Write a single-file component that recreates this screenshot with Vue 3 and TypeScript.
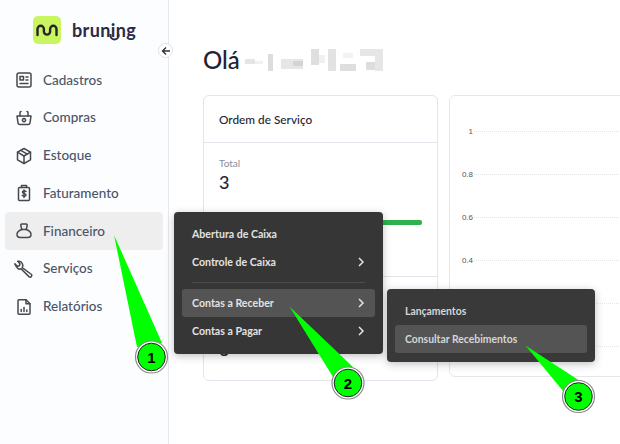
<script setup lang="ts">
interface NavItem { label: string; icon: string; active?: boolean }
const nav: NavItem[] = [
  { label: 'Cadastros', icon: 'card' },
  { label: 'Compras', icon: 'basket' },
  { label: 'Estoque', icon: 'box' },
  { label: 'Faturamento', icon: 'bill' },
  { label: 'Financeiro', icon: 'bag', active: true },
  { label: 'Serviços', icon: 'wrench' },
  { label: 'Relatórios', icon: 'report' },
]
const icons: Record<string, string[]> = {
  card: ['M3 5a2 2 0 0 1 2-2h10a2 2 0 0 1 2 2v10a2 2 0 0 1-2 2H5a2 2 0 0 1-2-2z', 'M6 6.500h3.500v3.500H6z', 'M6 13.500h8', 'M12 7h2', 'M12 10h2'],
  basket: ['M3 8h14l-1 6.800a2 2 0 0 1-2 1.700H6a2 2 0 0 1-2-1.700z', 'M6 8V4.500a1 1 0 0 1 1-1', 'M14 8V4.500a1 1 0 0 0-1-1', 'M10 10.500a1.600 1.600 0 1 0 .01 0'],
  box: ['M10 2.500l6.500 3.700v7.600L10 17.500l-6.500-3.700V6.200z', 'M3.500 6.200L10 10l6.500-3.800', 'M10 10v7.500', 'M6.800 4.400l6.500 3.800'],
  bill: ['M5.500 4.500h9a1 1 0 0 1 1 1v11a1 1 0 0 1-1 1h-9a1 1 0 0 1-1-1v-11a1 1 0 0 1 1-1z', 'M7.500 4.500V2.500h5v2', 'M12 8.500c-.5-.8-3.600-1-3.600.6 0 1.700 3.600 1 3.600 2.800 0 1.600-3.200 1.400-3.800.5', 'M10 7v7.500'],
  bag: ['M7.500 8.500h5c2.800 1.200 4.700 3.400 4.500 5.400-.2 1.600-1.300 2.600-3 2.600H6c-1.700 0-2.800-1-3-2.600-.2-2 1.700-4.200 4.500-5.400z', 'M7.800 8.500 6.800 4.500c-.2-.8.3-1.500 1-1.500h4.400c.7 0 1.200.7 1 1.500l-1 4'],
  wrench: ['M8.700 6.200A4 4 0 0 0 3.700 2.300l2.300 2.400-.6 2-2 .6L1 5', 'M8.700 6.200c.2 1-.1 1.800-.5 2.500l9.300 6.800a1.700 1.700 0 0 1-2.300 2.400L7 9.800c-2 .9-4 .2-6-4.800'],
  report: ['M5 2.800h7l4 4v9.400a1 1 0 0 1-1 1H5a1 1 0 0 1-1-1V3.800a1 1 0 0 1 1-1z', 'M12 2.800v4h4', 'M7.200 14.500v-2', 'M10 14.500v-4', 'M12.800 14.500v-1.500'],
}
const menu1 = [
  { label: 'Abertura de Caixa', arrow: false, active: false },
  { label: 'Controle de Caixa', arrow: true, active: false, divider: true },
  { label: 'Contas a Receber', arrow: true, active: true },
  { label: 'Contas a Pagar', arrow: true, active: false },
]
const ticks = ['1', '0.8', '0.6', '0.4', '', '']
const pixels = [
  [2, 10, 10, 5, '#e4e4e4'], [12, 12, 8, 3, '#f0f0f0'],
  [25, 5, 5, 17, '#dcdcdc'], [38, 10, 22, 10, '#e6e6e6'], [50, 12, 10, 5, '#d4d4d4'],
  [68, 0, 8, 16, '#dfdfdf'], [76, 6, 6, 8, '#f0f0f0'], [85, 0, 8, 22, '#e2e2e2'],
  [97, 15, 16, 7, '#dedede'], [100, 4, 10, 5, '#f2f2f2'], [117, 0, 23, 7, '#e6e6e6'],
  [123, 13, 17, 8, '#dddddd'], [132, 0, 8, 22, '#e6e6e6'],
]
function pixelStyle(p: (string | number)[]) {
  return { left: p[0] + 'px', top: p[1] + 'px', width: p[2] + 'px', height: p[3] + 'px', background: String(p[4]) }
}
const callouts = [
  { x: 151.500, y: 357, n: 1 },
  { x: 348, y: 383, n: 2 },
  { x: 578.500, y: 396.500, n: 3 },
]
</script>

<template>
  <div class="page">
    <aside class="sidebar">
      <div class="brand">
        <span class="logo">
          <svg width="28" height="28" viewBox="0 0 28 28" fill="none"><path d="M4.500 19v-6a3.200 3.200 0 0 1 6.400 0v2.500a3.100 3.100 0 0 0 6.200 0V13a3.200 3.200 0 0 1 6.400 0v6" stroke="#26262a" stroke-width="2.400" stroke-linecap="round" /></svg>
        </span>
        <span class="brand-name">
          bruning
          <svg class="swoop" width="64" height="28" viewBox="0 0 64 28" fill="none"><path d="M38.500 18v1.500a4 4 0 0 0 8 0V18" stroke="#2b2a45" stroke-width="2" /></svg>
        </span>
      </div>
      <nav class="nav">
        <div v-for="item in nav" :key="item.label" class="nav-item" :class="{ active: item.active }">
          <svg class="nav-icon" width="20" height="20" viewBox="0 0 20 20" fill="none">
            <path v-for="d in icons[item.icon]" :key="d" :d="d" stroke="#46484e" stroke-width="1.500" stroke-linecap="round" stroke-linejoin="round" />
          </svg>
          <span class="nav-label">{{ item.label }}</span>
        </div>
      </nav>
      <button class="collapse" aria-label="Recolher">
        <svg width="10" height="10" viewBox="0 0 10 10" fill="none"><path d="M9 5H2M5 1.500 1.500 5 5 8.500" stroke="#333" stroke-width="1.400" /></svg>
      </button>
    </aside>

    <main class="main">
      <h1 class="greeting">
        <span>Olá</span>
        <span class="blur"><i v-for="(p, i) in pixels" :key="i" :style="pixelStyle(p)"></i></span>
      </h1>
      <div class="cards">
        <div class="column">
          <section class="card">
            <header class="card-head">Ordem de Serviço</header>
            <div class="card-body">
              <div class="label">Total</div>
              <div class="value">3</div>
              <div class="bar"></div>
            </div>
            <div class="card-foot"><div class="value">3</div></div>
          </section>
        </div>
        <section class="chart">
          <div v-for="(t, i) in ticks" :key="i" class="tick">
            <span class="tick-label">{{ t }}</span>
            <span class="tick-line"></span>
          </div>
        </section>
      </div>
    </main>

    <div class="menu menu-one">
      <template v-for="m in menu1" :key="m.label">
        <div class="menu-item" :class="{ hot: m.active }">
          <span>{{ m.label }}</span>
          <svg v-if="m.arrow" width="8" height="10" viewBox="0 0 8 10" fill="none"><path d="M2 1l4 4-4 4" stroke="#e4e4e4" stroke-width="1.500" /></svg>
        </div>
        <div v-if="m.divider" class="menu-divider"></div>
      </template>
    </div>
    <div class="menu menu-two">
      <div class="menu-item">Lançamentos</div>
      <div class="menu-item hot">Consultar Recebimentos</div>
    </div>

    <svg class="callouts" width="620" height="444" viewBox="0 0 620 444">
      <g fill="#00ff00">
        <path d="M114 235 137 347 162 343z" />
        <path d="M289.500 306.500 333 377 353 367z" />
        <path d="M525.500 345.500 563 391 580 381z" />
      </g>
      <g v-for="c in callouts" :key="c.n">
        <circle :cx="c.x" :cy="c.y" r="16" fill="#fff" stroke="#8a8a8a" stroke-width="1.200" />
        <circle :cx="c.x" :cy="c.y" r="13.800" fill="#00ff00" stroke="#222" stroke-width="1" />
        <text :x="c.x" :y="c.y + 5.500" text-anchor="middle" class="callout-num">{{ c.n }}</text>
      </g>
    </svg>
  </div>
</template>

<style>
html, body { margin: 0; background: #fff; overflow: hidden; }
</style>

<style scoped>
.page {
  position: relative;
  width: 620px;
  height: 444px;
  display: flex;
  overflow: hidden;
  font-family: "Lato", "Noto Sans", sans-serif;
  color: #1d2433;
}
.sidebar {
  position: relative;
  box-sizing: border-box;
  width: 169px;
  flex: none;
  background: #fcfdff;
  border-right: 1px solid #e6e8ee;
  padding: 16px 5px 0;
}
.brand { display: flex; align-items: center; gap: 11px; padding-left: 28px; height: 28px; }
.logo {
  width: 28px; height: 28px; border-radius: 5px; background: #c9f560;
  display: flex; align-items: center; justify-content: center;
}
.brand-name { position: relative; font-size: 18px; font-weight: 700; color: #2b2a45; letter-spacing: 0.4px; line-height: 28px; }
.swoop { position: absolute; left: 0; top: 0; }
.nav { margin-top: 17.200px; display: flex; flex-direction: column; }
.nav-item {
  display: flex; align-items: center; gap: 9px;
  height: 37.750px; padding-left: 9px; border-radius: 4px;
  font-size: 13.500px; font-weight: 500; color: #4b5468;
}
.nav-label { margin-top: -1px; }
.nav-item.active { background: #eeeeee; }
.nav-icon { flex: none; }
.collapse {
  position: absolute; right: -5px; top: 43px; width: 15px; height: 15px; padding: 0;
  border-radius: 50%; background: #fff; border: 1px solid #dfe2ea;
  display: flex; align-items: center; justify-content: center;
}
.main { flex: 1; min-width: 0; padding: 47px 0 0 34px; }
.greeting {
  margin: 0; display: flex; align-items: center; gap: 3px;
  font-size: 24px; font-weight: 500; height: 26px; line-height: 26px; color: #1d2433;
}
.blur { position: relative; display: block; width: 140px; height: 22px; filter: blur(0.700px); }
.blur i { position: absolute; display: block; }
.cards { display: flex; gap: 11.500px; margin-top: 22px; }
.column { width: 234.500px; flex: none; }
.card {
  box-sizing: border-box; height: 286px;
  border: 1px solid #e3e5ec; border-radius: 6px; background: #fff;
  display: flex; flex-direction: column;
}
.card-head {
  height: 46px; padding-left: 15px; display: flex; align-items: center;
  font-size: 11.800px; font-weight: 500; border-bottom: 1px solid #e3e5ec;
}
.card-body { height: 134px; padding: 14px 15px 0; border-bottom: 1px solid #e3e5ec; box-sizing: border-box; }
.label { font-size: 10px; color: #8a8f99; line-height: 13px; }
.value { font-size: 18px; font-weight: 500; line-height: 24px; }
.bar { margin-top: 26px; height: 5px; background: #2fb24c; border-radius: 2px; }
.card-foot { flex: 1; padding: 60px 0 0 15px; }
.chart {
  flex: 1; box-sizing: border-box; height: 282px; margin-right: -10px;
  border: 1px solid #e6e7eb; border-radius: 6px 0 0 6px; padding-top: 28px;
}
.tick { display: flex; align-items: center; height: 14px; margin-bottom: 29px; }
.tick-label { width: 23px; text-align: right; font-family: "Liberation Sans", sans-serif; font-size: 8px; color: #555; }
.tick-line { flex: 1; margin-left: 1px; border-top: 1px dotted #e5e5e5; }
.menu {
  position: absolute; box-sizing: border-box; background: #363636; border-radius: 4px;
  box-shadow: 0 2px 8px rgba(0, 0, 0, 0.25);
}
.menu-one { left: 174px; top: 212px; width: 209px; height: 141.500px; padding: 8px 8px 0; }
.menu-two { left: 387px; top: 289px; width: 207.500px; height: 73px; padding: 8px 8px 0; background: #393939; }
.menu-item {
  display: flex; align-items: center; justify-content: space-between;
  height: 28px; padding: 0 10px; border-radius: 3px; box-sizing: border-box;
  font-size: 10.600px; font-weight: 700; color: #e2e2e2;
}
.menu-two .menu-item { font-size: 10.400px; color: #d6d6d6; }
.menu-item.hot { background: #545454; }
.menu-divider { height: 1px; margin: 6px 10px 6px; background: #4c4c4c; }
.callouts { position: absolute; left: 0; top: 0; pointer-events: none; }
.callout-num { font-family: "Liberation Sans", sans-serif; font-weight: 700; font-size: 15px; fill: #000; }
</style>
